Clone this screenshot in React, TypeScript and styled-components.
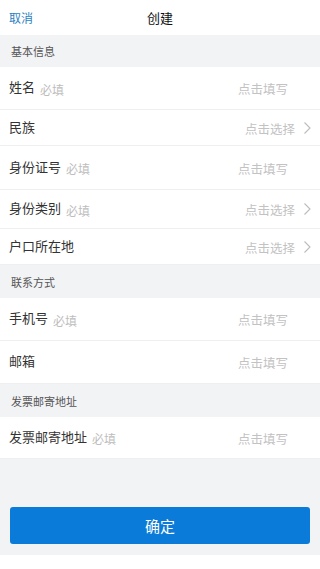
import React from "react";
import styled, { createGlobalStyle } from "styled-components";

const GlobalStyle = createGlobalStyle`
  html, body {
    margin: 0;
    padding: 0;
    background: #fff;
  }
  body {
    font-family: "Noto Sans CJK SC", "Noto Sans", sans-serif;
    -webkit-font-smoothing: antialiased;
  }
`;

const Page = styled.div`
  width: 320px;
  height: 569px;
  display: flex;
  flex-direction: column;
  background: #f2f3f5;
`;

const Header = styled.div`
  height: 35px;
  flex: none;
  display: grid;
  grid-template-columns: 60px 1fr 60px;
  align-items: center;
  background: #fff;
`;

const Cancel = styled.span`
  padding-left: 9px;
  font-size: 12px;
  color: #2a7fc1;
`;

const Title = styled.span`
  text-align: center;
  font-size: 13px;
  color: #111;
`;

const SectionTitle = styled.div<{ $h: number }>`
  height: ${(p) => p.$h}px;
  flex: none;
  display: flex;
  align-items: center;
  padding: 0 11px;
  font-size: 11px;
  color: #555;
`;

const Row = styled.div<{ $h: number }>`
  height: ${(p) => p.$h}px;
  flex: none;
  box-sizing: border-box;
  display: flex;
  align-items: center;
  padding: 0 9px 0 9px;
  background: #fff;
  border-bottom: 1px solid #eeeff1;
`;

const Label = styled.span`
  font-size: 13px;
  color: #333;
  margin-top: -3px;
`;

const Hint = styled.span`
  font-size: 12px;
  color: #bdbdbd;
  margin-left: 5px;
  margin-top: 2px;
`;

const Placeholder = styled.span<{ $select?: boolean }>`
  margin-left: auto;
  margin-right: ${(p) => (p.$select ? 8 : 23)}px;
  font-size: 12.5px;
  color: #c2c2c2;
  margin-top: 1px;
`;

const Chevron = () => (
  <svg width="8" height="14" viewBox="0 0 8 14">
    <path d="M1.5 1.5l5.5 5.5-5.5 5.5" fill="none" stroke="#bcbcbc" strokeWidth="1.1" />
  </svg>
);

const Filler = styled.div`
  flex: 1;
`;

const ButtonArea = styled.div`
  padding: 0 10px 11px;
  flex: none;
`;

const Confirm = styled.button`
  width: 100%;
  height: 37px;
  border: none;
  border-radius: 3px;
  background: #0a7bd8;
  color: #fff;
  font-family: inherit;
  font-size: 15px;
`;

const BottomStrip = styled.div`
  height: 14px;
  flex: none;
  background: #fff;
`;

type Field = { label: string; required?: boolean; select?: boolean; h: number };

const FieldRow = ({ label, required, select, h }: Field) => (
  <Row $h={h}>
    <Label>{label}</Label>
    {required && <Hint>必填</Hint>}
    <Placeholder $select={select}>{select ? "点击选择" : "点击填写"}</Placeholder>
    {select && <Chevron />}
  </Row>
);

const sections: { title: string; h: number; fields: Field[] }[] = [
  {
    title: "基本信息",
    h: 32,
    fields: [
      { label: "姓名", required: true, h: 43 },
      { label: "民族", select: true, h: 36 },
      { label: "身份证号", required: true, h: 44 },
      { label: "身份类别", required: true, select: true, h: 39 },
      { label: "户口所在地", select: true, h: 36 },
    ],
  },
  {
    title: "联系方式",
    h: 33,
    fields: [
      { label: "手机号", required: true, h: 43 },
      { label: "邮箱", h: 43 },
    ],
  },
  {
    title: "发票邮寄地址",
    h: 33,
    fields: [{ label: "发票邮寄地址", required: true, h: 42 }],
  },
];

export default function App() {
  return (
    <>
      <GlobalStyle />
      <Page>
        <Header>
          <Cancel>取消</Cancel>
          <Title>创建</Title>
          <span />
        </Header>
        {sections.map((s) => (
          <React.Fragment key={s.title}>
            <SectionTitle $h={s.h}>{s.title}</SectionTitle>
            {s.fields.map((f) => (
              <FieldRow key={f.label} {...f} />
            ))}
          </React.Fragment>
        ))}
        <Filler />
        <ButtonArea>
          <Confirm>确定</Confirm>
        </ButtonArea>
        <BottomStrip />
      </Page>
    </>
  );
}
